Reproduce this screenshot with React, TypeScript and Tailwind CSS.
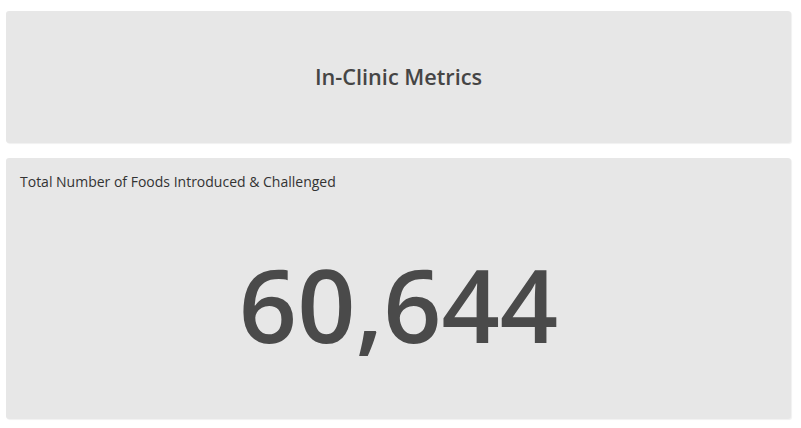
export default function App() {
  return (
    <div
      className="w-[801px] h-[428px] bg-white pl-[6px] pr-[10px] pt-[11px] flex flex-col gap-[15px]"
      style={{ fontFamily: '"Open Sans", sans-serif' }}
    >
      <div className="h-[132px] rounded-[3px] bg-[#e7e7e7] shadow-[1px_1px_1px_rgba(0,0,0,0.06)] flex items-center justify-center">
        <h1 className="text-[21.7px] font-semibold text-[#454545] leading-none">In-Clinic Metrics</h1>
      </div>
      <div className="h-[261px] rounded-[3px] bg-[#e7e7e7] shadow-[1px_1px_1px_rgba(0,0,0,0.06)] flex flex-col px-[14px] pt-[15px]">
        <div className="text-[14px] font-normal text-[#333333] leading-[18px]">
          Total Number of Foods Introduced &amp; Challenged
        </div>
        <div className="flex-1 flex items-center justify-center pb-[2px]">
          <div className="text-[102px] font-semibold text-[#4a4a4a] leading-none">60,644</div>
        </div>
      </div>
    </div>
  );
}
